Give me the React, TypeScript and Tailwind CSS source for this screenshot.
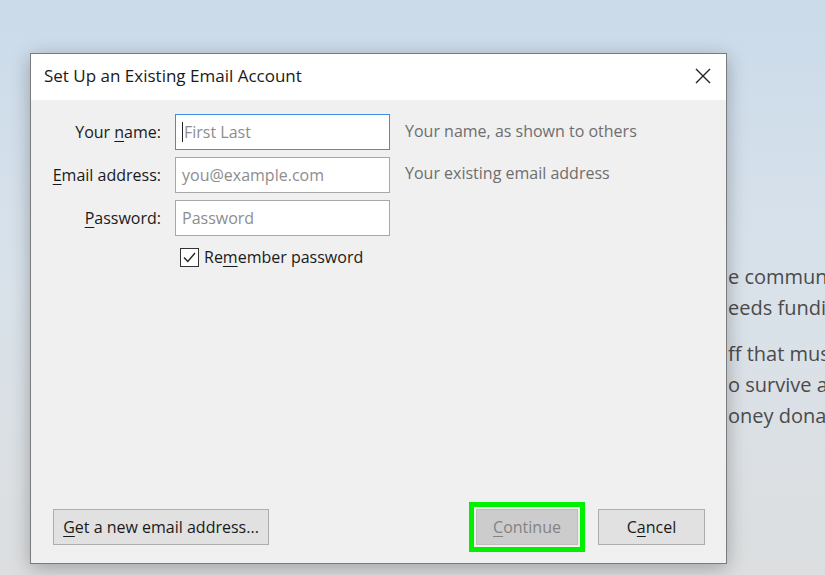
import React from 'react';

const ui = { fontFamily: '"Open Sans", "Noto Sans", sans-serif' };

function U({ children }: { children: React.ReactNode }) {
  return <span className="underline underline-offset-[3px]">{children}</span>;
}

export default function App() {
  return (
    <div
      className="relative w-[825px] h-[575px] overflow-hidden bg-gradient-to-b from-[#cbdbea] via-[#d9e2ea] to-[#dcdedf]"
      style={ui}
    >
      {/* page content behind the dialog */}
      <div className="pl-[728px] pt-[261px] text-[20px] leading-[31px] text-[#4b4b4b] whitespace-nowrap">
        <p>e community</p>
        <p>eeds funding</p>
        <p className="mt-[15px]">ff that must</p>
        <p>o survive and</p>
        <p>oney donated</p>
      </div>

      {/* Dialog */}
      <div className="absolute left-[30px] top-[53px] w-[697px] h-[511px] flex flex-col border border-[#7b7b7b] shadow-[0_4px_18px_rgba(0,0,0,0.28)]">
        <div className="h-[46px] bg-white flex items-center justify-between pl-[13px] pr-[14px]">
          <span className="text-[17px] text-[#1a1a1a] -mt-[2px]">Set Up an Existing Email Account</span>
          <svg width="18" height="18" viewBox="0 0 18 18" className="text-[#222] -mt-[3px]">
            <path d="M2 2 L16 16 M16 2 L2 16" stroke="currentColor" strokeWidth="1.4" />
          </svg>
        </div>

        <div className="flex-1 bg-[#f0f0f0] flex flex-col">
          <div className="grid grid-cols-[130px_215px_1fr] gap-x-[14px] gap-y-[7px] pt-[14px] text-[16px] items-center">
            <label className="text-right text-[#1a1a1a]">
              Your <U>n</U>ame:
            </label>
            <div className="h-[36px] bg-white border border-[#3d8ee0] flex items-center pl-[6px] text-[#8d8d8d]">
              <span className="w-px h-[20px] bg-[#222] mr-[1px]" />
              First Last
            </div>
            <span className="text-[#6e6e6e] pl-[1px] -mt-[2px]">Your name, as shown to others</span>

            <label className="text-right text-[#1a1a1a]">
              <U>E</U>mail address:
            </label>
            <div className="h-[36px] bg-white border border-[#a8a8a8] flex items-center pl-[6px] text-[#8d8d8d]">
              you@example.com
            </div>
            <span className="text-[#6e6e6e] pl-[1px] -mt-[4px]">Your existing email address</span>

            <label className="text-right text-[#1a1a1a]">
              <U>P</U>assword:
            </label>
            <div className="h-[36px] bg-white border border-[#a8a8a8] flex items-center pl-[6px] text-[#8d8d8d]">
              Password
            </div>
            <span />

            <span />
            <div className="flex items-center gap-[5px] pl-[5px] mt-[2px] text-[#1a1a1a]">
              <span className="w-[19px] h-[19px] border border-[#333] bg-white flex items-center justify-center">
                <svg width="15" height="15" viewBox="0 0 15 15">
                  <path d="M2 7.5 L5.8 11.5 L13 3" fill="none" stroke="#222" strokeWidth="1.4" />
                </svg>
              </span>
              <span>
                Re<U>m</U>ember password
              </span>
            </div>
            <span />
          </div>

          <div className="mt-auto mb-[18px] flex items-center pl-[22px] pr-[21px] text-[16px]">
            <button className="w-[216px] h-[36px] bg-[#e1e1e1] border border-[#adadad] text-[#1a1a1a]">
              <U>G</U>et a new email address...
            </button>
            <button className="ml-auto w-[102px] h-[36px] bg-[#cccccc] border border-[#bfbfbf] text-[#838383] outline-[5px] outline-solid outline-[#00f000] outline-offset-2">
              <U>C</U>ontinue
            </button>
            <button className="ml-[20px] w-[107px] h-[36px] bg-[#e1e1e1] border border-[#adadad] text-[#1a1a1a]">
              C<U>a</U>ncel
            </button>
          </div>
        </div>
      </div>
    </div>
  );
}
